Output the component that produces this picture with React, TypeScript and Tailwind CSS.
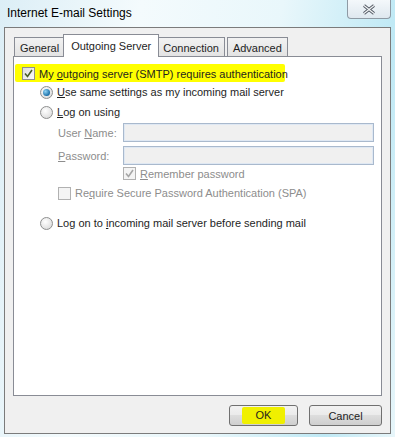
import React from "react";

const font = { fontFamily: '"Liberation Sans", Arial, sans-serif' };

function Check({ checked, disabled }: { checked?: boolean; disabled?: boolean }) {
  return (
    <span
      className={`relative flex h-[13px] w-[13px] shrink-0 items-center justify-center border ${
        disabled ? "border-[#b1b1b1] bg-[#f4f4f4]" : "border-[#8e8f8f] bg-[linear-gradient(135deg,#dcdcdc,#fbfbfb)]"
      }`}
    >
      {checked ? (
        <svg width="9" height="9" viewBox="0 0 9 9">
          <path
            d="M1 4.5 L3.5 7.5 L8 1"
            fill="none"
            stroke={disabled ? "#a6a6a6" : "#4a5f2a"}
            strokeWidth="1.6"
          />
        </svg>
      ) : null}
    </span>
  );
}

function Radio({ checked }: { checked?: boolean }) {
  return (
    <span className="flex h-[13px] w-[13px] shrink-0 items-center justify-center rounded-full border border-[#8e8f8f] bg-[radial-gradient(circle_at_40%_35%,#ffffff,#d4d4d4)]">
      {checked ? (
        <span className="h-[7px] w-[7px] rounded-full bg-[radial-gradient(circle_at_35%_35%,#8fd3f5,#1a6fa8_70%)]" />
      ) : null}
    </span>
  );
}

function Tab({ label, active }: { label: string; active?: boolean }) {
  return active ? (
    <div className="relative z-10 -mb-px -mx-[2px] flex h-[23px] items-start whitespace-nowrap border border-b-0 border-[#898c95] bg-white px-[7px] pt-[4px]">
      {label}
    </div>
  ) : (
    <div className="mt-[3px] flex h-[19px] items-center whitespace-nowrap border border-b-0 border-[#898c95] bg-[linear-gradient(#f2f2f2,#e3e3e3)] px-[5px] pt-[2px]">
      {label}
    </div>
  );
}

export default function App() {
  return (
    <div
      className="flex h-[437px] w-[395px] flex-col whitespace-nowrap bg-[linear-gradient(100deg,#dceef6_0%,#f4fbfd_30%,#e9f7fb_60%,#bfe9f5_85%,#e8f6fa_100%)] text-[11px] leading-[14px] text-[#1e1e1e]"
      style={font}
    >
      <div className="flex h-[27px] items-start justify-between">
        <span className="pl-[7px] pt-[6px] text-[12px] text-black">Internet E-mail Settings</span>
        <div className="mr-[4px] flex h-[19px] w-[44px] items-center justify-center rounded-b-[4px] border border-t-0 border-[#8f9aa4] bg-[linear-gradient(#f4f8fb,#dfe8ef)]">
          <svg width="14" height="11" viewBox="0 0 14 11">
            <path d="M2 1.5 L12 9.5 M12 1.5 L2 9.5" stroke="#4e5560" strokeWidth="3" />
            <path d="M2 1.5 L12 9.5 M12 1.5 L2 9.5" stroke="#f2f4f6" strokeWidth="1.3" />
          </svg>
        </div>
      </div>

      <div className="mx-[4px] mb-[3px] flex flex-1 flex-col border border-[#7b7b7b] bg-[#f0f0f0] px-[8px] pt-[6px]">
        <div className="flex pl-[1px]">
          <Tab label="General" />
          <Tab label="Outgoing Server" active />
          <Tab label="Connection" />
          <div className="w-[2px]" />
          <Tab label="Advanced" />
        </div>

        <div className="flex h-[340px] flex-col border border-[#898c95] bg-white pl-[1px] pt-[7px]">
          <div className="flex h-[18px] w-[270px] items-center gap-[4px] rounded-[2px] bg-[#ffff00] pl-[7px]">
            <Check checked />
            <span className="pt-[1px]">
              My <span className="underline">o</span>utgoing server (SMTP) requires authentication
            </span>
          </div>

          <div className="mt-[1px] flex flex-col pl-[25px]">
            <div className="flex h-[18px] items-center gap-[4px]">
              <Radio checked />
              <span>
                <span className="underline">U</span>se same settings as my incoming mail server
              </span>
            </div>
            <div className="mt-[2px] flex h-[18px] items-center gap-[4px]">
              <Radio />
              <span>
                <span className="underline">L</span>og on using
              </span>
            </div>

            <div className="flex flex-col pl-[18px] pr-[7px] text-[#8d8d8d]">
              <div className="mt-[2px] flex items-center">
                <span className="w-[65px]">
                  User <span className="underline">N</span>ame:
                </span>
                <div className="h-[19px] flex-1 border border-[#a9b9cd] bg-[#f0f0f0] shadow-[inset_0_0_0_1px_#dfe8f3]" />
              </div>
              <div className="mt-[4px] flex items-center">
                <span className="w-[65px]">
                  <span className="underline">P</span>assword:
                </span>
                <div className="h-[19px] flex-1 border border-[#a9b9cd] bg-[#f0f0f0] shadow-[inset_0_0_0_1px_#dfe8f3]" />
              </div>
              <div className="mt-[1px] flex h-[15px] items-center gap-[4px] pl-[65px]">
                <Check checked disabled />
                <span>
                  <span className="underline">R</span>emember password
                </span>
              </div>
              <div className="mt-[3px] flex h-[18px] items-center gap-[4px]">
                <Check disabled />
                <span>
                  Re<span className="underline">q</span>uire Secure Password Authentication (SPA)
                </span>
              </div>
            </div>

            <div className="mt-[12px] flex h-[18px] items-center gap-[4px]">
              <Radio />
              <span>
                Log on to <span className="underline">i</span>ncoming mail server before sending mail
              </span>
            </div>
          </div>
        </div>

        <div className="mt-[9px] flex justify-end gap-[11px]">
          <button className="flex h-[21px] w-[69px] items-center justify-center rounded-[3px] border border-[#707070] bg-[linear-gradient(#f2f2f2_0%,#ebebeb_45%,#dddddd_50%,#cfcfcf_100%)]">
            <span className="rounded-[2px] bg-[#f0f000] px-[14px] leading-[17px]">OK</span>
          </button>
          <button className="flex h-[21px] w-[73px] items-center justify-center rounded-[3px] border border-[#707070] bg-[linear-gradient(#f2f2f2_0%,#ebebeb_45%,#dddddd_50%,#cfcfcf_100%)]">
            Cancel
          </button>
        </div>
      </div>
    </div>
  );
}
